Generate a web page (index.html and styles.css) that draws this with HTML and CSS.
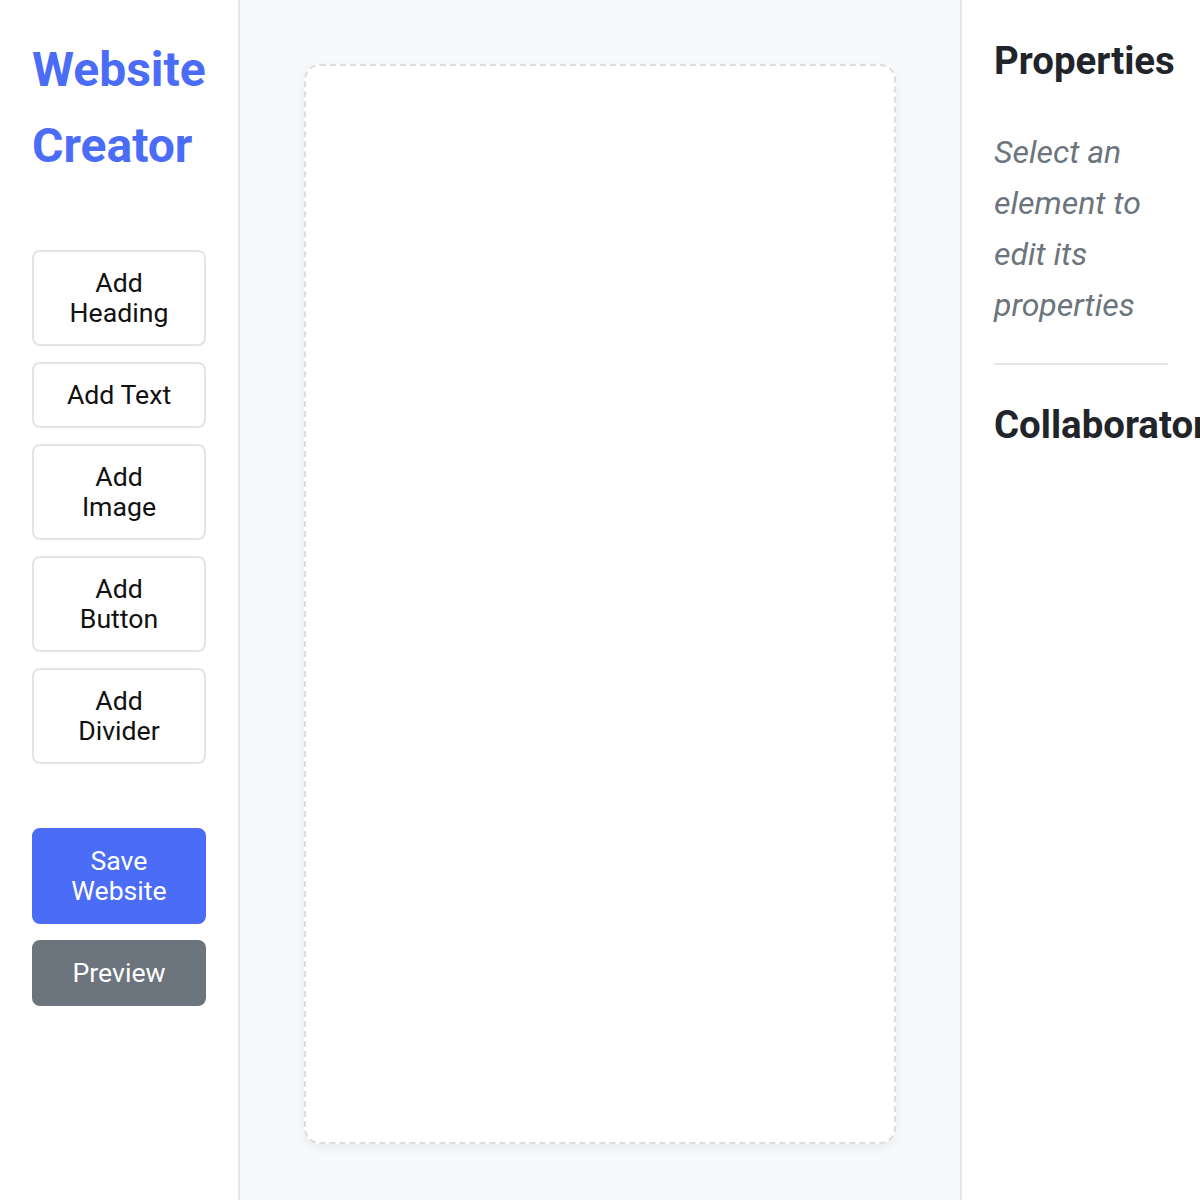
FILE: index.html
```html
<!DOCTYPE html>
<html lang="en">
<head>
<meta charset="utf-8">
<title>Website Creator</title>
<link rel="stylesheet" href="styles.css">
</head>
<body>
<div class="app">
  <aside class="sidebar">
    <h1 class="brand">Website Creator</h1>
    <div class="tools">
      <button class="tool-btn">Add Heading</button>
      <button class="tool-btn">Add Text</button>
      <button class="tool-btn">Add Image</button>
      <button class="tool-btn">Add Button</button>
      <button class="tool-btn">Add Divider</button>
    </div>
    <div class="actions">
      <button class="action-btn primary">Save Website</button>
      <button class="action-btn secondary">Preview</button>
    </div>
  </aside>
  <main class="workspace">
    <div class="canvas"></div>
  </main>
  <aside class="panel">
    <h2 class="panel-title">Properties</h2>
    <p class="hint">Select an element to edit its properties</p>
    <hr class="divider">
    <h2 class="panel-title">Collaborators</h2>
  </aside>
</div>
</body>
</html>
```

FILE: styles.css
```css
* {
  box-sizing: border-box;
}

html, body {
  margin: 0;
  height: 100%;
  overflow: hidden;
}

body {
  font-family: Roboto, "Liberation Sans", sans-serif;
  line-height: 1.6;
  color: #212529;
  background: #ffffff;
}

.app {
  display: flex;
  height: 1200px;
}

/* left column: brand + element tools */
.sidebar {
  width: 240px;
  flex: none;
  padding: 32px;
  border-right: 2px solid #e4e6ea;
  background: #ffffff;
  display: flex;
  flex-direction: column;
}

.brand {
  margin: 0 0 66px;
  font-size: 48px;
  font-weight: 700;
  line-height: 76px;
  color: #4a6cf7;
}

.tools {
  display: flex;
  flex-direction: column;
  gap: 16px;
}

.tool-btn,
.action-btn {
  font-family: inherit;
  font-size: 26.67px;
  line-height: 30px;
  padding: 16px 24px;
  border-radius: 8px;
  text-align: center;
  cursor: pointer;
}

.tool-btn {
  background: #ffffff;
  color: #111111;
  border: 2px solid #e4e4e4;
}

.actions {
  margin-top: 64px;
  display: flex;
  flex-direction: column;
  gap: 16px;
}

.action-btn {
  border: 2px solid transparent;
  color: #ffffff;
}

.action-btn.primary {
  background: #4a6cf7;
  border-color: #4a6cf7;
}

.action-btn.secondary {
  background: #6c757d;
  border-color: #6c757d;
}

/* centre: page canvas */
.workspace {
  flex: 1;
  background: #f8f9fa;
  padding: 64px;
}

.canvas {
  height: 1080px;
  background: #ffffff;
  border: 2px dashed #dddddd;
  border-radius: 16px;
  box-shadow: 0 4px 12px rgba(0, 0, 0, 0.06);
}

/* right column: properties */
.panel {
  width: 240px;
  flex: none;
  padding: 32px;
  border-left: 2px solid #e4e6ea;
  background: #ffffff;
  white-space: nowrap;
  overflow: hidden;
}

.panel-title {
  margin: 0 0 37px;
  font-size: 38.4px;
  font-weight: 700;
  line-height: 57.6px;
  color: #212529;
}

.hint {
  margin: 0;
  font-size: 32px;
  line-height: 51.2px;
  font-style: italic;
  color: #6c757d;
  white-space: normal;
}

.divider {
  margin: 32px 0 31px;
  border: 0;
  border-top: 2px solid #e4e6ea;
}
```
